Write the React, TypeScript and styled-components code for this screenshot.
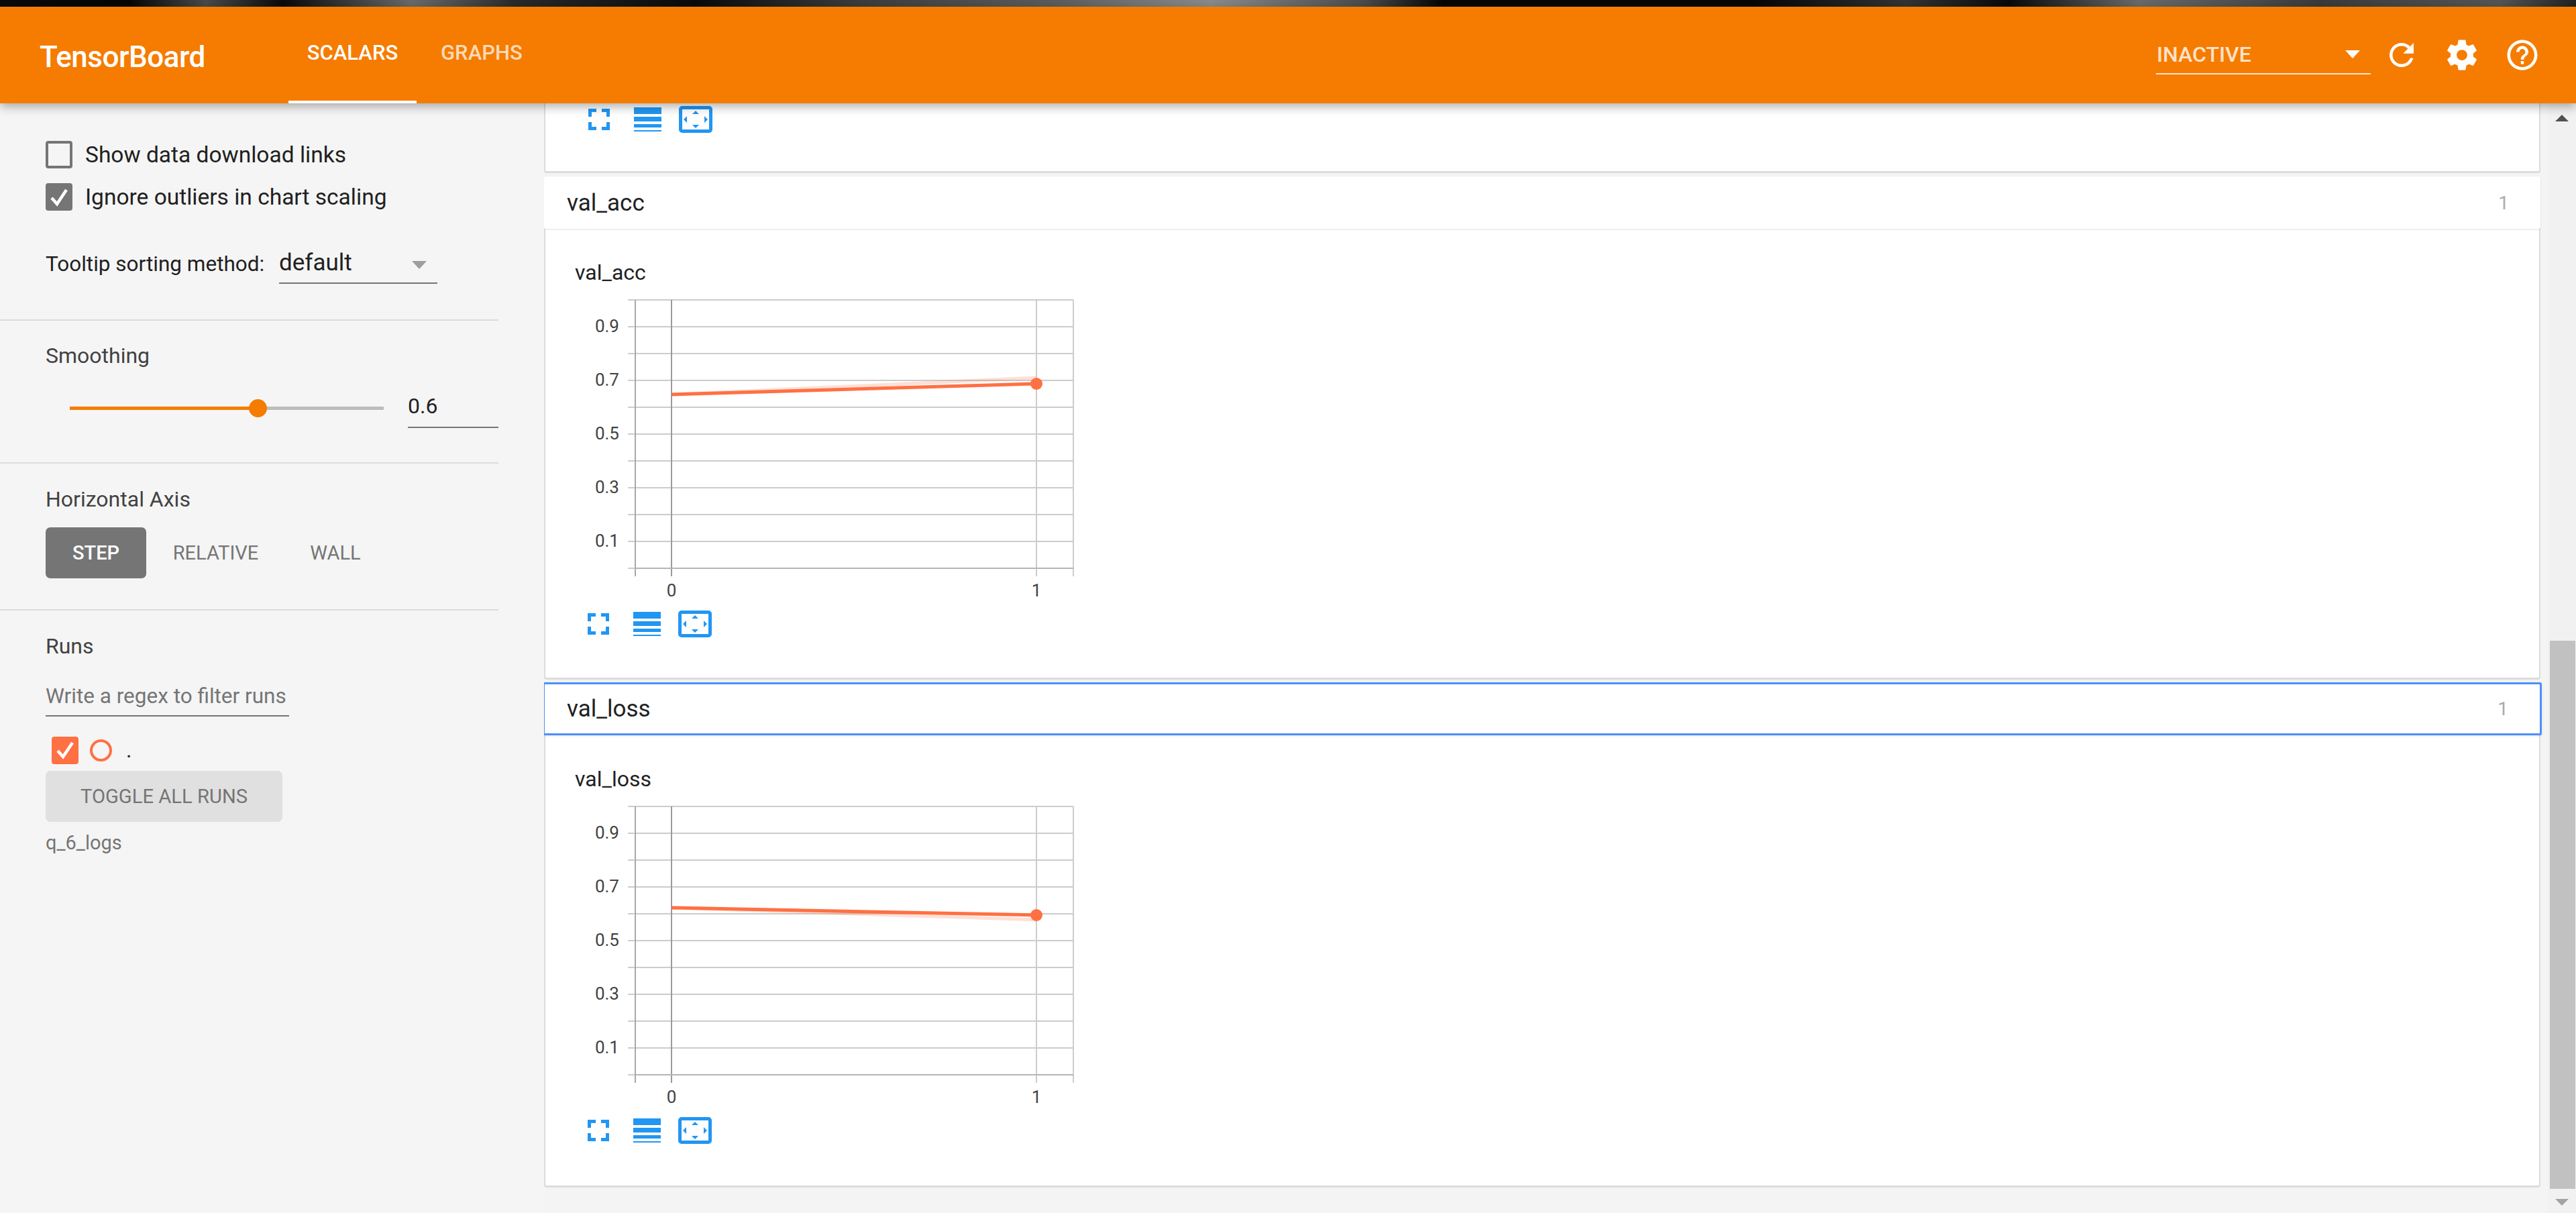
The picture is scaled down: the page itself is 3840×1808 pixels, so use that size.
import React from 'react';
import styled, { createGlobalStyle } from 'styled-components';

const GlobalStyle = createGlobalStyle`
	html, body {
		margin: 0;
		padding: 0;
		height: 100%;
		overflow: hidden;
		background: #f4f4f4;
		font-family: Roboto, "Liberation Sans", sans-serif;
	}
`;

const Page = styled.div`
	width: 3840px;
	height: 1808px;
	display: flex;
	flex-direction: column;
	overflow: hidden;
`;

const WallpaperStrip = styled.div`
	height: 10px;
	flex: none;
	background: linear-gradient(
		90deg,
		#0a0a0a 0%,
		#050505 5%,
		#4a4a4a 8%,
		#0a0a0a 11%,
		#6a6a6a 16%,
		#2a2a2a 20%,
		#0a0a0a 27%,
		#3a3a3a 33%,
		#5c5c5c 41%,
		#8a8a8a 47%,
		#4a4a4a 53%,
		#050505 56%,
		#050505 68%,
		#333 74%,
		#0a0a0a 78%,
		#6a6a6a 83%,
		#3a3a3a 90%,
		#555 97%,
		#222 100%
	);
`;

const Toolbar = styled.header`
	height: 144px;
	flex: none;
	display: flex;
	align-items: flex-start;
	padding-right: 17px;
	background: #f57c00;
	color: #fff;
	box-shadow: 0 5px 14px rgba(0, 0, 0, 0.32);
	position: relative;
	z-index: 2;
`;

const Brand = styled.div`
	width: 430px;
	padding: 49px 0 0 59px;
	box-sizing: border-box;
	font-size: 44px;
	font-weight: 500;
	line-height: 52px;
	letter-spacing: -0.5px;
`;

const Tab = styled.div<{ $active?: boolean }>`
	height: 144px;
	box-sizing: border-box;
	padding: 51px 0 0;
	width: ${(p) => (p.$active ? '191px' : '197px')};
	text-align: ${(p) => (p.$active ? 'center' : 'left')};
	font-size: 31px;
	font-weight: 500;
	line-height: 36px;
	color: ${(p) => (p.$active ? '#fff' : 'rgba(255,255,255,0.72)')};
	border-bottom: 4px solid ${(p) => (p.$active ? '#fff' : 'transparent')};
	padding-left: ${(p) => (p.$active ? 0 : '36px')};
`;

const ToolbarSpacer = styled.div`
	flex: 1;
`;

const RunSelect = styled.div`
	width: 320px;
	height: 101px;
	margin-right: 19px;
	box-sizing: border-box;
	padding-top: 53px;
	padding-left: 1px;
	border-bottom: 2px solid rgba(255, 255, 255, 0.8);
	display: flex;
	justify-content: space-between;
	font-size: 32px;
	line-height: 36px;
	font-weight: 500;
	color: rgba(255, 255, 255, 0.8);
`;

const DownArrow = styled.span<{ $color: string }>`
	width: 0;
	height: 0;
	margin: 12px 16px 0 0;
	border-left: 11.5px solid transparent;
	border-right: 11.5px solid transparent;
	border-top: 12px solid ${(p) => p.$color};
`;

const ToolbarIcon = styled.svg`
	width: 54px;
	height: 54px;
	margin: 45px 36px 0 0;
	flex: none;
	fill: #fff;
`;

const Body = styled.div`
	flex: 1;
	display: flex;
	min-height: 0;
`;

const Sidebar = styled.aside`
	width: 811px;
	flex: none;
	background: #f5f5f5;
`;

const SidebarSection = styled.section<{ $height: number; $top: number }>`
	height: ${(p) => p.$height}px;
	box-sizing: border-box;
	margin-right: 68px;
	padding: ${(p) => p.$top}px 0 0 68px;
	border-bottom: 2px solid #dcdcdc;
	&:last-child {
		border-bottom: 0;
	}
`;

const CheckRow = styled.label`
	display: flex;
	align-items: center;
	height: 41px;
	margin-bottom: 22px;
	font-size: 33.5px;
	color: #212121;
	gap: 19px;
`;

const CheckBox = styled.span<{ $checked?: boolean; $color?: string }>`
	width: 40px;
	height: 41px;
	box-sizing: border-box;
	flex: none;
	display: flex;
	align-items: center;
	justify-content: center;
	border-radius: 4px;
	border: 4px solid ${(p) => p.$color ?? '#757575'};
	background: ${(p) => (p.$checked ? p.$color ?? '#757575' : 'transparent')};
	svg {
		width: 32px;
		height: 32px;
		fill: none;
		stroke: #fff;
		stroke-width: 4.5;
	}
`;

const TooltipRow = styled.div`
	display: flex;
	align-items: flex-start;
	margin-top: 47px;
	font-size: 31.5px;
	color: #212121;
`;

const TooltipLabel = styled.span`
	width: 348px;
	line-height: 38px;
	padding-top: 14px;
	flex: none;
`;

const TooltipSelect = styled.div`
	width: 236px;
	height: 62px;
	box-sizing: border-box;
	padding-top: 16px;
	border-bottom: 2px solid #757575;
	display: flex;
	justify-content: space-between;
	font-size: 35px;
	line-height: 30px;
	color: #212121;
`;

const SectionTitle = styled.div`
	font-size: 32px;
	line-height: 38px;
	color: #424242;
`;

const SliderRow = styled.div`
	display: flex;
	align-items: flex-start;
	margin-top: 27px;
`;

const SliderTrack = styled.div`
	width: 468px;
	height: 5px;
	margin: 30px 36px 0 36px;
	background: #bdbdbd;
	position: relative;
	flex: none;
`;

const SliderFill = styled.div`
	height: 100%;
	background: #f57c00;
`;

const SliderThumb = styled.div`
	position: absolute;
	top: -11px;
	width: 27px;
	height: 27px;
	margin-left: -13.5px;
	border-radius: 50%;
	background: #f57c00;
`;

const SliderValue = styled.div`
	width: 135px;
	height: 62px;
	box-sizing: border-box;
	border-bottom: 2px solid #757575;
	font-size: 32px;
	line-height: 38px;
	padding-top: 10px;
	color: #212121;
`;

const AxisButtons = styled.div`
	display: flex;
	margin-top: 23px;
`;

const AxisButton = styled.div<{ $active?: boolean; $width: number }>`
	width: ${(p) => p.$width}px;
	height: 76px;
	display: flex;
	align-items: center;
	justify-content: center;
	border-radius: 7px;
	font-size: 29px;
	font-weight: ${(p) => (p.$active ? 500 : 400)};
	background: ${(p) => (p.$active ? '#757575' : 'transparent')};
	color: ${(p) => (p.$active ? '#fff' : '#757575')};
`;

const RegexField = styled.div`
	width: 363px;
	height: 54px;
	margin-top: 32px;
	box-sizing: border-box;
	border-bottom: 2px solid #757575;
	font-size: 31.5px;
	line-height: 38px;
	color: #757575;
	padding-top: 5px;
	white-space: nowrap;
`;

const RunRow = styled.div`
	display: flex;
	align-items: center;
	height: 40px;
	margin: 30px 0 0 9px;
	gap: 17px;
	font-size: 32px;
	color: #212121;
`;

const RunDot = styled.span`
	width: 33px;
	height: 33px;
	box-sizing: border-box;
	border: 4px solid #ff7043;
	border-radius: 50%;
	flex: none;
`;

const RunName = styled.span`
	margin-left: 4px;
`;

const ToggleButton = styled.div`
	width: 353px;
	height: 76px;
	margin-top: 11px;
	border-radius: 7px;
	display: flex;
	align-items: center;
	justify-content: center;
	background: #e0e0e0;
	color: #757575;
	font-size: 29.2px;
	font-weight: 400;
`;

const LogDir = styled.div`
	margin-top: 14px;
	font-size: 29px;
	line-height: 34px;
	color: #757575;
`;

const Main = styled.main`
	flex: 1;
	min-width: 0;
	padding-right: 11px;
	background: #f4f4f4;
	overflow: hidden;
`;

const Category = styled.div`
	background: #fff;
	border-left: 2px solid #dcdcdc;
	border-right: 2px solid #dcdcdc;
	border-bottom: 3px solid #dcdcdc;
	border-radius: 0 0 4px 4px;
`;

const CutOffCard = styled(Category)`
	box-sizing: border-box;
	height: 104px;
	padding: 2px 0 0 45px;
`;

const CategoryHeader = styled.div<{ $focused?: boolean }>`
	height: ${(p) => (p.$focused ? '79px' : '78px')};
	box-sizing: border-box;
	margin: ${(p) => (p.$focused ? '4px -2px 0 -2px' : '5px 0 0 0')};
	display: flex;
	align-items: center;
	justify-content: space-between;
	padding: 0 47px 0 ${(p) => (p.$focused ? '33px' : '34px')};
	background: #fff;
	font-size: 35px;
	color: #212121;
	border: ${(p) => (p.$focused ? '3px solid #4d90fe' : '0')};
	border-radius: 3px;
	box-shadow: 0 1px 3px rgba(0, 0, 0, 0.12);
	position: relative;
`;

const Count = styled.span`
	font-size: 28px;
	color: #aaa;
`;

const ChartBody = styled(Category)`
	height: 672px;
	padding: 46px 0 0 44px;
	box-sizing: border-box;
	&:last-child {
		height: 674px;
	}
`;

const ChartTitle = styled.div`
	font-size: 32px;
	line-height: 38px;
	color: #212121;
`;

const ChartSvg = styled.svg`
	display: block;
	width: 760px;
	height: 460px;
	margin: 21px 0 4px;
	text {
		font-family: Roboto, "Liberation Sans", sans-serif;
		font-size: 26px;
		fill: #424242;
	}
`;

const ActionRow = styled.div`
	display: flex;
	align-items: center;
	height: 40px;
	margin-top: 2px;
	padding-left: 19px;
`;

const ActionIcon = styled.svg<{ $width: number; $gap: number }>`
	width: ${(p) => p.$width}px;
	height: 40px;
	flex: none;
	margin-right: ${(p) => p.$gap}px;
	fill: #2196f3;
`;

const ScrollBar = styled.div`
	width: 42px;
	flex: none;
	background: #f1f1f1;
	display: flex;
	flex-direction: column;
	align-items: center;
`;

const ScrollArrow = styled.span<{ $up?: boolean }>`
	width: 0;
	height: 0;
	border-left: 10px solid transparent;
	border-right: 10px solid transparent;
	${(p) =>
		p.$up
			? 'border-bottom: 10px solid #505050; margin-top: 17px;'
			: 'border-top: 10px solid #a3a3a3; margin-top: 15px;'}
`;

const ScrollThumb = styled.div`
	width: 38px;
	height: 817px;
	margin-top: 774px;
	margin-left: 2px;
	flex: none;
	background: #c1c1c1;
`;

function Actions() {
	return (
		<ActionRow>
			<ActionIcon $width={32} $gap={36} viewBox="0 0 32 32">
				<path d="M0 0h12v5H5v7H0zM20 0h12v12h-5V5h-7zM0 20h5v7h7v5H0zM27 20h5v12H20v-5h7z" />
			</ActionIcon>
			<ActionIcon $width={41} $gap={26} viewBox="0 0 41 40">
				<path d="M0 2h41v10H0zM0 16h41v7H0zM0 27h41v5H0zM0 36h41v2H0z" />
			</ActionIcon>
			<ActionIcon $width={50} $gap={0} viewBox="0 0 50 40">
				<path
					fillRule="evenodd"
					d="M5 0h40a5 5 0 0 1 5 5v30a5 5 0 0 1-5 5H5a5 5 0 0 1-5-5V5a5 5 0 0 1 5-5zm0 5v30h40V5z"
				/>
				<path d="M25 7l5 5H20zM25 33l-5-5h10zM7 20l5-5v10zM43 20l-5 5V15z" />
			</ActionIcon>
		</ActionRow>
	);
}

interface ScalarChartProps {
	startY: number;
	endY: number;
	rawEndY: number;
}

// plot coordinates are relative to the svg: step 0 is at x 144, step 1 at x 688
function ScalarChart({ startY, endY, rawEndY }: ScalarChartProps) {
	const rows = [0, 40, 80, 120, 160, 200, 240, 280, 320, 360, 400];
	const labels: [string, number][] = [
		['0.9', 40],
		['0.7', 120],
		['0.5', 200],
		['0.3', 280],
		['0.1', 360],
	];
	return (
		<ChartSvg viewBox="0 0 760 460">
			{rows.map((y) => (
				<line key={y} x1={79} x2={743} y1={y + 1} y2={y + 1} stroke="#cccccc" strokeWidth={2} />
			))}
			<line x1={90} x2={90} y1={1} y2={413} stroke="#a8a8a8" strokeWidth={2} />
			<line x1={144} x2={144} y1={1} y2={413} stroke="#9a9a9a" strokeWidth={2} />
			<line x1={688} x2={688} y1={1} y2={413} stroke="#cccccc" strokeWidth={2} />
			<line x1={743} x2={743} y1={1} y2={413} stroke="#cccccc" strokeWidth={2} />
			<line x1={90} x2={743} y1={401} y2={401} stroke="#b5b5b5" strokeWidth={2} />
			{labels.map(([text, y]) => (
				<text key={text} x={66} y={y + 9} textAnchor="end">
					{text}
				</text>
			))}
			<text x={144} y={443} textAnchor="middle">
				0
			</text>
			<text x={688} y={443} textAnchor="middle">
				1
			</text>
			<line x1={144} x2={688} y1={startY} y2={rawEndY} stroke="#ff7043" strokeOpacity={0.22} strokeWidth={5} />
			<line x1={144} x2={688} y1={startY} y2={endY} stroke="#ff7043" strokeWidth={5} />
			<circle cx={688} cy={endY} r={9} fill="#ff7043" />
		</ChartSvg>
	);
}

export default function App() {
	return (
		<Page>
			<GlobalStyle />
			<WallpaperStrip />
			<Toolbar>
				<Brand>TensorBoard</Brand>
				<Tab $active>SCALARS</Tab>
				<Tab>GRAPHS</Tab>
				<ToolbarSpacer />
				<RunSelect>
					<span>INACTIVE</span>
					<DownArrow $color="#fff" />
				</RunSelect>
				<ToolbarIcon viewBox="0 0 24 24">
					<path d="M17.65 6.35C16.2 4.9 14.21 4 12 4c-4.42 0-7.99 3.58-7.99 8s3.57 8 7.99 8c3.73 0 6.84-2.55 7.73-6h-2.08c-.82 2.33-3.04 4-5.65 4-3.31 0-6-2.69-6-6s2.69-6 6-6c1.66 0 3.14.69 4.22 1.78L13 11h7V4l-2.35 2.35z" />
				</ToolbarIcon>
				<ToolbarIcon viewBox="0 0 24 24">
					<path d="M19.43 12.98c.04-.32.07-.64.07-.98s-.03-.66-.07-.98l2.11-1.65c.19-.15.24-.42.12-.64l-2-3.46c-.12-.22-.39-.3-.61-.22l-2.49 1c-.52-.4-1.08-.73-1.69-.98l-.38-2.65C14.46 2.18 14.25 2 14 2h-4c-.25 0-.46.18-.49.42l-.38 2.65c-.61.25-1.17.59-1.69.98l-2.49-1c-.23-.09-.49 0-.61.22l-2 3.46c-.13.22-.07.49.12.64l2.11 1.65c-.04.32-.07.65-.07.98s.03.66.07.98l-2.11 1.65c-.19.15-.24.42-.12.64l2 3.46c.12.22.39.3.61.22l2.49-1c.52.4 1.08.73 1.69.98l.38 2.65c.03.24.24.42.49.42h4c.25 0 .46-.18.49-.42l.38-2.65c.61-.25 1.17-.59 1.69-.98l2.49 1c.23.09.49 0 .61-.22l2-3.46c.12-.22.07-.49-.12-.64l-2.11-1.65zM12 15.5c-1.93 0-3.5-1.57-3.5-3.5s1.57-3.5 3.5-3.5 3.5 1.57 3.5 3.5-1.57 3.5-3.5 3.5z" />
				</ToolbarIcon>
				<ToolbarIcon viewBox="0 0 24 24">
					<path d="M11 18h2v-2h-2v2zm1-16C6.48 2 2 6.48 2 12s4.48 10 10 10 10-4.48 10-10S17.52 2 12 2zm0 18c-4.41 0-8-3.59-8-8s3.59-8 8-8 8 3.59 8 8-3.59 8-8 8zm0-14c-2.21 0-4 1.79-4 4h2c0-1.1.9-2 2-2s2 .9 2 2c0 2-3 1.75-3 5h2c0-2.25 3-2.5 3-5 0-2.21-1.79-4-4-4z" />
				</ToolbarIcon>
			</Toolbar>
			<Body>
				<Sidebar>
					<SidebarSection $height={324} $top={56}>
						<CheckRow>
							<CheckBox />
							Show data download links
						</CheckRow>
						<CheckRow>
							<CheckBox $checked>
								<svg viewBox="0 0 32 32">
									<path d="M5 17l8 9L27 5" />
								</svg>
							</CheckBox>
							Ignore outliers in chart scaling
						</CheckRow>
						<TooltipRow>
							<TooltipLabel>Tooltip sorting method:</TooltipLabel>
							<TooltipSelect>
								<span>default</span>
								<DownArrow $color="#9e9e9e" />
							</TooltipSelect>
						</TooltipRow>
					</SidebarSection>
					<SidebarSection $height={213} $top={33}>
						<SectionTitle>Smoothing</SectionTitle>
						<SliderRow>
							<SliderTrack>
								<SliderFill style={{ width: '60%' }} />
								<SliderThumb style={{ left: '60%' }} />
							</SliderTrack>
							<SliderValue>0.6</SliderValue>
						</SliderRow>
					</SidebarSection>
					<SidebarSection $height={219} $top={34}>
						<SectionTitle>Horizontal Axis</SectionTitle>
						<AxisButtons>
							<AxisButton $active $width={150}>STEP</AxisButton>
							<AxisButton $width={207}>RELATIVE</AxisButton>
							<AxisButton $width={150}>WALL</AxisButton>
						</AxisButtons>
					</SidebarSection>
					<SidebarSection $height={500} $top={34}>
						<SectionTitle>Runs</SectionTitle>
						<RegexField>Write a regex to filter runs</RegexField>
						<RunRow>
							<CheckBox $checked $color="#ff7043">
								<svg viewBox="0 0 32 32">
									<path d="M5 17l8 9L27 5" />
								</svg>
							</CheckBox>
							<RunDot />
							<RunName>.</RunName>
						</RunRow>
						<ToggleButton>TOGGLE ALL RUNS</ToggleButton>
						<LogDir>q_6_logs</LogDir>
					</SidebarSection>
				</Sidebar>
				<Main>
					<CutOffCard>
						<Actions />
					</CutOffCard>
					<CategoryHeader>
						val_acc
						<Count>1</Count>
					</CategoryHeader>
					<ChartBody>
						<ChartTitle>val_acc</ChartTitle>
						<ScalarChart startY={142} endY={126} rawEndY={117} />
						<Actions />
					</ChartBody>
					<CategoryHeader $focused>
						val_loss
						<Count>1</Count>
					</CategoryHeader>
					<ChartBody>
						<ChartTitle>val_loss</ChartTitle>
						<ScalarChart startY={152} endY={163} rawEndY={170} />
						<Actions />
					</ChartBody>
				</Main>
				<ScrollBar>
					<ScrollArrow $up />
					<ScrollThumb />
					<ScrollArrow />
				</ScrollBar>
			</Body>
		</Page>
	);
}
